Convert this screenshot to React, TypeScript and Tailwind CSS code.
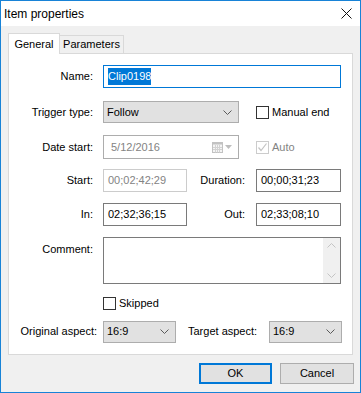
import type { ReactNode } from 'react'

const font = "font-['Liberation_Sans','Arial',sans-serif]"

function Label({ children, className = '' }: { children: ReactNode; className?: string }) {
  return <div className={`text-right text-[11px] text-[#000] ${className}`}>{children}</div>
}

function Chevron({ color = '#5a5a5a' }: { color?: string }) {
  return (
    <svg width="9" height="5" viewBox="0 0 9 5" className="shrink-0">
      <path d="M0.5 0.5 L4.5 4.5 L8.5 0.5" fill="none" stroke={color} strokeWidth="1" />
    </svg>
  )
}

function Select({ value, className = '' }: { value: string; className?: string }) {
  return (
    <div
      className={`flex h-[22px] items-center justify-between border border-[#adadad] bg-[#e1e1e1] pl-[3px] pr-[6px] text-[11px] text-black ${className}`}
    >
      <span>{value}</span>
      <Chevron />
    </div>
  )
}

function TextBox({ value, disabled = false, className = '' }: { value: string; disabled?: boolean; className?: string }) {
  return (
    <div
      className={`flex h-[23px] items-center border bg-white px-[4px] text-[11px] ${
        disabled ? 'border-[#cccccc] text-[#838383]' : 'border-[#7a7a7a] text-black'
      } ${className}`}
    >
      {value}
    </div>
  )
}

function CheckBox({ label, checked = false, disabled = false }: { label: string; checked?: boolean; disabled?: boolean }) {
  return (
    <div className="flex items-center gap-[3px]">
      <div
        className={`flex h-[13px] w-[13px] items-center justify-center border bg-white ${
          disabled ? 'border-[#cccccc]' : 'border-[#333333]'
        }`}
      >
        {checked && (
          <svg width="11" height="11" viewBox="0 0 11 11">
            <path d="M1.5 5.5 L4 8.5 L9.5 1.5" fill="none" stroke={disabled ? '#c4c4c4' : '#333'} strokeWidth="1.2" />
          </svg>
        )}
      </div>
      <span className={`text-[11px] ${disabled ? 'text-[#838383]' : 'text-black'}`}>{label}</span>
    </div>
  )
}

function CalendarIcon() {
  return (
    <div className="flex items-center gap-[2px]">
      <svg width="11" height="11" viewBox="0 0 11 11">
        <rect x="0.5" y="0.5" width="10" height="10" fill="#f4f4f4" stroke="#c2c2c2" />
        <rect x="0.5" y="0.5" width="10" height="2" fill="#c2c2c2" />
        <path d="M3.5 3 V10.5 M5.5 3 V10.5 M7.5 3 V10.5 M1 5.5 H10 M1 7.5 H10" stroke="#d2d2d2" strokeWidth="1" />
      </svg>
      <svg width="7" height="4" viewBox="0 0 7 4">
        <path d="M0 0 H7 L3.5 4 Z" fill="#bdbdbd" />
      </svg>
    </div>
  )
}

export default function App() {
  return (
    <div className={`${font} flex h-[393px] w-[361px] flex-col border border-[#1883d7] bg-[#f0f0f0]`}>
      {/* title bar */}
      <div className="flex h-[25px] shrink-0 items-center justify-between bg-white pl-[3px] pr-[8px]">
        <span className="text-[12px] text-black">Item properties</span>
        <svg width="11" height="11" viewBox="0 0 11 11">
          <path d="M0.5 0.5 L10.5 10.5 M10.5 0.5 L0.5 10.5" stroke="#111" strokeWidth="1" />
        </svg>
      </div>

      {/* tabs */}
      <div className="mt-[7px] flex items-end pl-[7px]">
        <div className="relative z-10 -mb-px flex h-[21px] w-[52px] items-center justify-center border border-b-0 border-[#d9d9d9] bg-white text-[11px] text-black">
          General
        </div>
        <div className="flex h-[18px] w-[64px] items-center justify-center border border-b-0 border-l-0 border-[#d9d9d9] bg-[#f0f0f0] text-[11px] text-black">
          Parameters
        </div>
      </div>

      {/* panel */}
      <div className="ml-[7px] flex h-[302px] w-[345px] flex-col border border-[#d9d9d9] bg-white pt-[11px]">
        <div className="flex items-center">
          <Label className="w-[84px]">Name:</Label>
          <div className="ml-[10px] flex h-[23px] w-[238px] items-center border border-[#0078d7] bg-white pl-[4px] text-[11px]">
            <span className="bg-[#0078d7] text-white">Clip0198</span>
          </div>
        </div>

        <div className="mt-[13px] flex items-center">
          <Label className="w-[84px]">Trigger type:</Label>
          <Select value="Follow" className="ml-[10px] w-[136px]" />
          <div className="ml-[17px]">
            <CheckBox label="Manual end" />
          </div>
        </div>

        <div className="mt-[12px] flex items-center">
          <Label className="w-[84px]">Date start:</Label>
          <div className="ml-[10px] flex h-[24px] w-[136px] items-center justify-between border border-[#adadad] bg-white pl-[7px] pr-[6px] text-[11px] text-[#838383]">
            <span>5/12/2016</span>
            <CalendarIcon />
          </div>
          <div className="ml-[17px]">
            <CheckBox label="Auto" checked disabled />
          </div>
        </div>

        <div className="mt-[10px] flex items-center">
          <Label className="w-[84px]">Start:</Label>
          <TextBox value="00;02;42;29" disabled className="ml-[10px] w-[84px]" />
          <Label className="w-[58px]">Duration:</Label>
          <TextBox value="00;00;31;23" className="ml-[11px] w-[85px]" />
        </div>

        <div className="mt-[11px] flex items-center">
          <Label className="w-[84px]">In:</Label>
          <TextBox value="02;32;36;15" className="ml-[10px] w-[84px]" />
          <Label className="w-[58px]">Out:</Label>
          <TextBox value="02;33;08;10" className="ml-[11px] w-[85px]" />
        </div>

        <div className="mt-[11px] flex items-start">
          <Label className="mt-[4px] w-[84px]">Comment:</Label>
          <div className="ml-[10px] flex h-[47px] w-[238px] justify-end border border-[#7a7a7a] bg-white">
            <div className="flex w-[17px] flex-col items-center justify-between bg-[#f0f0f0] py-[5px]">
              <svg width="9" height="5" viewBox="0 0 9 5">
                <path d="M0.5 4.5 L4.5 0.5 L8.5 4.5" fill="none" stroke="#c4c4c4" strokeWidth="1" />
              </svg>
              <svg width="9" height="5" viewBox="0 0 9 5">
                <path d="M0.5 0.5 L4.5 4.5 L8.5 0.5" fill="none" stroke="#c4c4c4" strokeWidth="1" />
              </svg>
            </div>
          </div>
        </div>

        <div className="mt-[11px] flex items-center pl-[94px]">
          <CheckBox label="Skipped" />
        </div>

        <div className="mt-[9px] flex items-center">
          <Label className="w-[88px]">Original aspect:</Label>
          <Select value="16:9" className="ml-[6px] w-[73px]" />
          <div className="ml-[12px] w-[81px] text-[11px] text-black">Target aspect:</div>
          <Select value="16:9" className="w-[73px]" />
        </div>
      </div>

      {/* buttons */}
      <div className="mt-[8px] flex justify-end gap-[8px] pr-[6px]">
        <div className="flex h-[21px] w-[73px] items-center justify-center border-2 border-[#0078d7] bg-[#e1e1e1] text-[11px] text-black">
          OK
        </div>
        <div className="flex h-[21px] w-[74px] items-center justify-center border border-[#adadad] bg-[#e1e1e1] text-[11px] text-black">
          Cancel
        </div>
      </div>
    </div>
  )
}
